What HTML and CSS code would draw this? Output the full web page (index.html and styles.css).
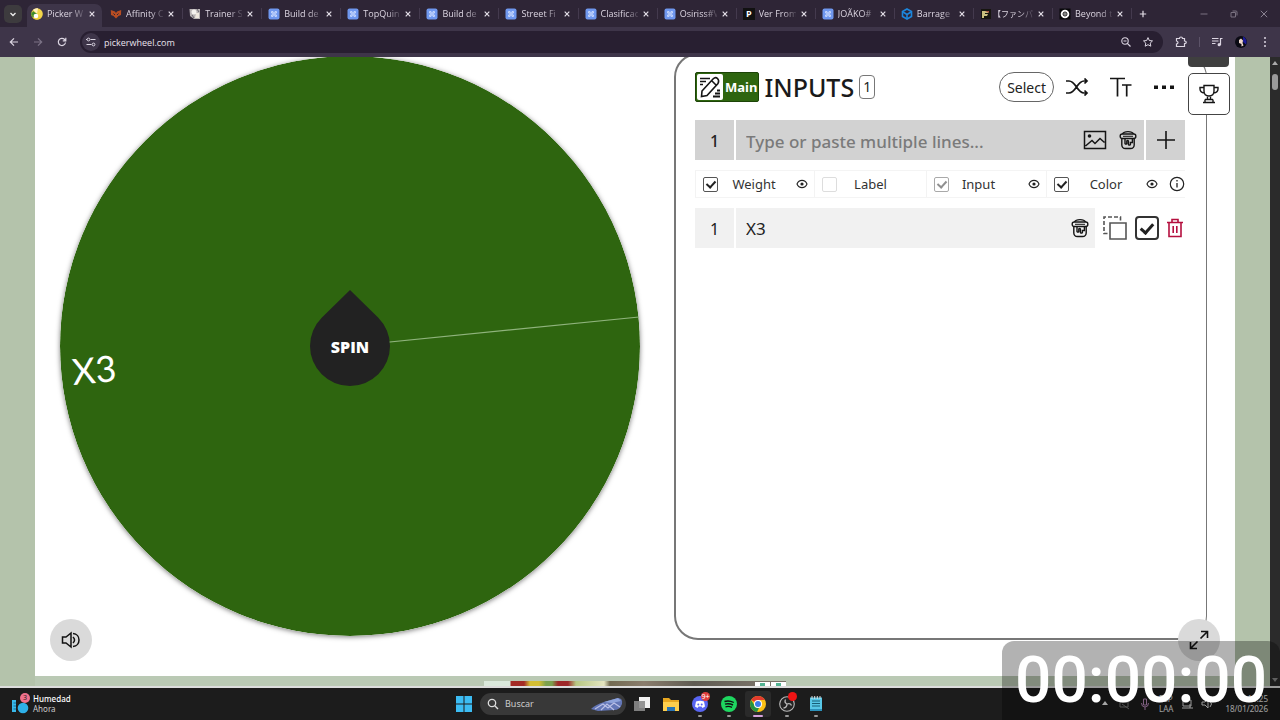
FILE: index.html
```html
<!DOCTYPE html>
<html lang="en">
<head>
<meta charset="utf-8">
<title>Picker Wheel</title>
<link rel="stylesheet" href="styles.css">
</head>
<body>
<svg class="defs" aria-hidden="true">
  <symbol id="doc" viewBox="0 0 12 12"><rect x="0.5" y="0.5" width="11" height="11" rx="2" fill="#6f97ee"/><path d="M3.500 3.500h1.500v1.500H3.500zM7 3.500h1.500v1.500H7zM3.500 7h1.500v1.500H3.500zM7 7h1.500v1.500H7zM5 5h2v2H5z" fill="none" stroke="#c3d4fb" stroke-width="1"/></symbol>
  <symbol id="x" viewBox="0 0 8 8"><path d="M1.700 1.700l4.600 4.600M6.300 1.700L1.700 6.300" stroke="#e4dfe8" stroke-width="1.200"/></symbol>
  <symbol id="eye" viewBox="0 0 12 10"><path d="M1 5C3 .2 9 .2 11 5C9 9.800 3 9.800 1 5z" fill="none" stroke="#222" stroke-width="1.100"/><circle cx="6" cy="5" r="1.600" fill="#222"/></symbol>
  <symbol id="bucket" viewBox="0 0 18 20"><g fill="none" stroke="#151515" stroke-width="1.400"><path d="M3.500 4C5 .8 13 .8 14.500 4"/><rect x="1.200" y="4" width="15.600" height="4.500" rx="2"/><path d="M4 6.300h10" stroke-width="1"/><path d="M2.800 8.500V15Q3 18.500 6.500 18.500H11.500Q15 18.500 15.200 15V8.500"/><path d="M6 8.500v5q.9 1.200 1.800 0V11q.8-1 1.600 0v3.500q1 1.200 2 0V12.500h2v-4"/></g></symbol>
</svg>

<header class="browser">
  <div class="tabstrip">
    <button class="tab-search" aria-label="Search tabs"><svg viewBox="0 0 8 8" width="8" height="8"><path d="M1.500 3L4 5.500 6.500 3" fill="none" stroke="#eee" stroke-width="1.300"/></svg></button>
    <nav class="tabs">
      <div class="tab active"><svg class="fav" viewBox="0 0 12 12"><circle cx="6" cy="6" r="5.800" fill="#f3d64b"/><path d="M6 6L2 1.800A5.800 5.800 0 0 1 7 .3z" fill="#fff0c0"/><path d="M6 6L.5 4A5.800 5.800 0 0 0 2 10z" fill="#5c9a2c"/><path d="M6 6L2 10A5.800 5.800 0 0 0 10.500 9.500z" fill="#f2cf3a"/><path d="M2 3L6 6 .5 7z" fill="#3f8a2e"/><circle cx="5" cy="8" r="2.300" fill="#fff"/></svg><span>Picker W</span><button aria-label="Close"><svg><use href="#x"/></svg></button></div>
      <div class="tab"><svg class="fav" viewBox="0 0 12 12"><path d="M.8 2L5 3.500 6 5 7 3.500 11.200 2 11 7 8.500 8 6 10.500 3.500 8 1 7z" fill="#b84d22"/><path d="M3.500 5.500l1.500 1.500M8.500 5.500L7 7" stroke="#2e2536"/></svg><span>Affinity C</span><button aria-label="Close"><svg><use href="#x"/></svg></button></div>
      <div class="tab"><svg class="fav" viewBox="0 0 12 12"><path d="M.5 1H11V11H5L1 8z" fill="#b9b4b5"/><circle cx="5" cy="4" r="2.500" fill="#f5f2ef"/><path d="M7 5h3v5H6z" fill="#efe8df"/><path d="M8 1l2 3M3 7l2 3" stroke="#6b6670"/></svg><span>Trainer S</span><button aria-label="Close"><svg><use href="#x"/></svg></button></div>
      <div class="tab"><svg class="fav"><use href="#doc"/></svg><span>Build de</span><button aria-label="Close"><svg><use href="#x"/></svg></button></div>
      <div class="tab"><svg class="fav"><use href="#doc"/></svg><span>TopQuin</span><button aria-label="Close"><svg><use href="#x"/></svg></button></div>
      <div class="tab"><svg class="fav"><use href="#doc"/></svg><span>Build de</span><button aria-label="Close"><svg><use href="#x"/></svg></button></div>
      <div class="tab"><svg class="fav"><use href="#doc"/></svg><span>Street Fi</span><button aria-label="Close"><svg><use href="#x"/></svg></button></div>
      <div class="tab"><svg class="fav"><use href="#doc"/></svg><span>Clasificac</span><button aria-label="Close"><svg><use href="#x"/></svg></button></div>
      <div class="tab"><svg class="fav"><use href="#doc"/></svg><span>Osiriss#V</span><button aria-label="Close"><svg><use href="#x"/></svg></button></div>
      <div class="tab"><i class="fav fav-p">P</i><span>Ver From</span><button aria-label="Close"><svg><use href="#x"/></svg></button></div>
      <div class="tab"><svg class="fav"><use href="#doc"/></svg><span>JOÃKO#</span><button aria-label="Close"><svg><use href="#x"/></svg></button></div>
      <div class="tab"><svg class="fav" viewBox="0 0 12 12"><path d="M6 1l4.500 2.500v5L6 11 1.500 8.500v-5z" fill="none" stroke="#1c86dc" stroke-width="1.600"/><path d="M2 4l4 2.500L10 4M6 6.500V11" fill="none" stroke="#1c86dc" stroke-width="1.600"/></svg><span>Barrage</span><button aria-label="Close"><svg><use href="#x"/></svg></button></div>
      <div class="tab"><svg class="fav" viewBox="0 0 12 12"><rect x="1" y="1" width="10" height="10" fill="#16150f"/><path d="M2 3h7L8 5H5v1h3L7 8H4v2H2z" fill="#c9c07e"/><path d="M5 3h4v2z" fill="#a95542"/></svg><span class="jp">【ファンパ</span><button aria-label="Close"><svg><use href="#x"/></svg></button></div>
      <div class="tab"><svg class="fav" viewBox="0 0 12 12"><rect x=".5" y=".5" width="11" height="11" fill="#08080a"/><circle cx="6" cy="6" r="4.300" fill="#fff"/><circle cx="6" cy="6" r="2" fill="none" stroke="#111"/><path d="M5 6h2" stroke="#111"/></svg><span>Beyond t</span><button aria-label="Close"><svg><use href="#x"/></svg></button></div>
    </nav>
    <button class="new-tab" aria-label="New tab"><svg viewBox="0 0 8 8" width="8" height="8"><path d="M4 .8v6.400M.8 4h6.400" stroke="#e4dfe8" stroke-width="1.200"/></svg></button>
    <div class="window-buttons">
      <button aria-label="Minimize"><svg viewBox="0 0 8 8" width="8" height="8"><path d="M.5 4h7" stroke="#7a7281"/></svg></button>
      <button aria-label="Restore"><svg viewBox="0 0 8 8" width="8" height="8"><path d="M1 2.500h4.500V7H1zM2.500 1H6Q7 1 7 2v3.500" fill="none" stroke="#7a7281"/></svg></button>
      <button aria-label="Close window"><svg viewBox="0 0 8 8" width="8" height="8"><path d="M.8.8l6.400 6.400M7.200.8L.8 7.200" stroke="#8a8291"/></svg></button>
    </div>
  </div>
  <div class="toolbar">
    <button aria-label="Back"><svg viewBox="0 0 10 10"><path d="M9 5H1.500M5 1.300L1.300 5 5 8.700" fill="none" stroke="#dcd6e2" stroke-width="1.200"/></svg></button>
    <button aria-label="Forward"><svg viewBox="0 0 10 10"><path d="M1 5h7.500M5 1.300L8.700 5 5 8.700" fill="none" stroke="#7c7386" stroke-width="1.200"/></svg></button>
    <button aria-label="Reload"><svg viewBox="0 0 10 10"><path d="M8.500 5.500A3.600 3.600 0 1 1 7.600 2.500L8.700 3.700M8.800.8V3.800H5.800" fill="none" stroke="#dcd6e2" stroke-width="1.200"/></svg></button>
    <div class="omnibox">
      <button class="site-info" aria-label="Site information"><svg viewBox="0 0 10 10"><path d="M0 2.500h1M4.500 2.500H9.500M.5 7.500h5" stroke="#dcd6e2" stroke-width="1.200"/><circle cx="2.500" cy="2.500" r="1.400" fill="none" stroke="#dcd6e2"/><circle cx="7.500" cy="7.500" r="1.400" fill="none" stroke="#dcd6e2"/></svg></button>
      <input aria-label="Address" value="pickerwheel.com">
      <button aria-label="Zoom"><svg viewBox="0 0 10 10"><circle cx="4" cy="4" r="3.200" fill="none" stroke="#dcd6e2" stroke-width="1.100"/><path d="M6.300 6.300L9.500 9.500M2.500 4h3" stroke="#dcd6e2" stroke-width="1.200"/></svg></button>
      <button aria-label="Bookmark"><svg viewBox="0 0 10 10"><path d="M5 .6L6.300 3.500 9.500 3.900 7.200 6.100 7.800 9.200 5 7.700 2.200 9.200 2.800 6.100.5 3.900 3.700 3.500z" fill="none" stroke="#dcd6e2"/></svg></button>
    </div>
    <div class="tools">
      <button aria-label="Extensions"><svg viewBox="0 0 12 12"><path d="M1.500 2.500H4.500Q4.500 1 6 1T7.500 2.500H9.500V5Q11.300 5 11.300 6.300T9.500 7.700V10.500H1.500V8Q3 7.800 3 6.500T1.500 5z" fill="none" stroke="#dcd6e2" stroke-width="1.200"/></svg></button>
      <i class="divider"></i>
      <button aria-label="Media"><svg viewBox="0 0 12 12"><path d="M1 2.500h6.500M1 5h6.500M1 7.500h3.500M9.500 9V2.500H11.500" fill="none" stroke="#dcd6e2" stroke-width="1.200"/><circle cx="8.200" cy="8.700" r="1.600" fill="#dcd6e2"/></svg></button>
      <button aria-label="Profile"><svg viewBox="0 0 12 12"><circle cx="6" cy="6" r="6" fill="#0b0b14"/><path d="M8 .5a6 6 0 0 1 3 8L8 6z" fill="#1c1b96"/><path d="M4 4l2-1.500 2 2-.5 2.500 1 2.500-2 1V8L4 7z" fill="#f0d9cc"/></svg></button>
      <button aria-label="Menu"><svg viewBox="0 0 12 12"><circle cx="6" cy="2" r="1" fill="#dcd6e2"/><circle cx="6" cy="6" r="1" fill="#dcd6e2"/><circle cx="6" cy="10" r="1" fill="#dcd6e2"/></svg></button>
    </div>
  </div>
</header>

<div class="viewport">
  <div class="page">
    <main class="content">
      <section class="wheel-area">
        <div class="wheel">
          <svg viewBox="0 0 580 580" class="disc"><circle cx="290" cy="290" r="290" fill="#2e650f"/><path d="M290 290L579 261" stroke="#8fb37c" stroke-width="1.200"/></svg>
          <span class="slice-label">X3</span>
          <button class="spin"><svg viewBox="0 0 80 96"><path d="M40 0L68.300 27.700A40 40 0 1 1 11.700 27.700z" fill="#222"/></svg><b>SPIN</b></button>
        </div>
        <button class="round sound" aria-label="Sound"><svg viewBox="0 0 20 18" width="20" height="18"><path d="M1.500 6H5L10 2V16L5 12H1.500z" fill="none" stroke="#111" stroke-width="1.500"/><path d="M12 6Q15 9 12 12M12 2.500C20 3 20 15 12 15.500" fill="none" stroke="#111" stroke-width="1.500"/></svg></button>
      </section>

      <section class="panel">
        <div class="panel-head">
          <button class="main-btn"><svg viewBox="0 0 26 26"><rect width="26" height="26" rx="2" fill="#fff"/><g stroke="#151515" fill="none"><path d="M3 4.500h10M3 7.500h6M3 10.500h3" stroke-width="1.600"/><path d="M16 22.500h7M18 19.500h5M20 16.500h3" stroke-width="1.800"/><path d="M5 17L16 5Q18.500 2.500 20.500 4.500T21 9.500L10 21.500 4.500 22.500zM14.500 6.500l4.500 4.500" stroke-width="1.600"/></g></svg><span>Main</span></button>
          <h1>INPUTS</h1><span class="count">1</span>
          <div class="actions">
            <button class="select">Select</button>
            <button aria-label="Shuffle"><svg viewBox="0 0 24 18" width="24" height="18"><path d="M1 3H4C11 3 12 15 19 15H22M1 15H4C11 15 12 3 19 3H22M19.500 .5L22 3 19.500 5.500M19.500 12.500L22 15 19.500 17.500" fill="none" stroke="#151515" stroke-width="1.700"/></svg></button>
            <button aria-label="Text size"><svg viewBox="0 0 24 22" width="24" height="22"><path d="M1 2.500H16M8.500 2.500V20.500M13 9H22.500M17.700 9V20.500" fill="none" stroke="#151515" stroke-width="1.700"/></svg></button>
            <button aria-label="More"><svg viewBox="0 0 22 6" width="22" height="6"><path d="M1 1.500h4v3.500h-4zM9 1.500h4v3.500H9zM17 1.500h4v3.500h-4z" fill="#151515"/></svg></button>
          </div>
        </div>

        <div class="new-entry">
          <span class="num">1</span>
          <input aria-label="New input" placeholder="Type or paste multiple lines...">
          <button aria-label="Image"><svg viewBox="0 0 24 20" width="24" height="20"><path d="M1.500 1.500h21v17h-21zM2.500 16L9 10.500 12 13.500 17 8.500 21.500 12.500" fill="none" stroke="#151515" stroke-width="1.500"/><circle cx="6.500" cy="6" r="1.800" fill="#151515"/></svg></button>
          <button aria-label="Color"><svg width="18" height="20"><use href="#bucket"/></svg></button>
          <button class="add" aria-label="Add"><svg viewBox="0 0 18 18" width="18" height="18"><path d="M9 0v18M0 9h18" stroke="#151515" stroke-width="1.600"/></svg></button>
        </div>

        <div class="columns">
          <label><input type="checkbox" checked><span>Weight</span></label>
          <button aria-label="Show weight"><svg><use href="#eye"/></svg></button>
          <label class="lab"><input type="checkbox" class="off"><span>Label</span></label>
          <label class="inp"><input type="checkbox" class="dim" checked><span>Input</span></label>
          <button aria-label="Show input"><svg><use href="#eye"/></svg></button>
          <label><input type="checkbox" checked><span>Color</span></label>
          <button aria-label="Show color"><svg><use href="#eye"/></svg></button>
          <button class="info" aria-label="Info"><svg viewBox="0 0 16 16"><circle cx="8" cy="8" r="6.700" fill="none" stroke="#222" stroke-width="1.200"/><path d="M8 7v4.500M8 4v1.500" stroke="#222" stroke-width="1.300"/></svg></button>
        </div>

        <div class="entry">
          <div class="entry-main">
            <span class="num">1</span>
            <input aria-label="Input 1" value="X3">
            <button aria-label="Color"><svg width="18" height="20"><use href="#bucket"/></svg></button>
          </div>
          <button aria-label="Duplicate"><svg viewBox="0 0 24 24" width="24" height="24"><path d="M7 7h16v16H7z" fill="none" stroke="#555" stroke-width="1.600"/><path d="M4.500 17.500H1V1H17.500V4.500" fill="none" stroke="#555" stroke-width="1.600" stroke-dasharray="4 2"/></svg></button>
          <input type="checkbox" aria-label="Enabled" class="big" checked>
          <button aria-label="Delete"><svg viewBox="0 0 16 20" width="16" height="20"><path d="M0 4.500h16M5 4V1.500h6V4M2 4.500V18.500H14V4.500M6.200 8v7M9.800 8v7" fill="none" stroke="#b5103f" stroke-width="1.600"/></svg></button>
        </div>
      </section>

      <div class="side-tab"></div>
      <button class="trophy" aria-label="Results"><svg viewBox="0 0 20 20" width="20" height="20"><path d="M5 1.500h10V7Q15 12 10 12T5 7zM5 3.500H1V5Q1 8.500 5.500 9M15 3.500H19V5Q19 8.500 14.500 9M8.500 12v3.500M11.500 12v3.500M6 15.500h8M4 18.500h12M6 15.500v3M14 15.500v3" fill="none" stroke="#151515" stroke-width="1.400"/></svg></button>
      <button class="round expand" aria-label="Fullscreen"><svg viewBox="0 0 20 20" width="20" height="20"><path d="M11.500 8.500L18 2M12 1.500H18.500V8M8.500 11.500L2 18M1.500 12V18.500H8" fill="none" stroke="#111" stroke-width="1.600"/></svg></button>
    </main>
    <div class="ad-strip"><div class="ad"><i></i><i></i></div></div>
  </div>
  <div class="scrollbar"><svg viewBox="0 0 8 6"><path d="M4 1l3 4H1z" fill="#aaa"/></svg><i></i><svg class="down" viewBox="0 0 8 6"><path d="M4 5l3-4H1z" fill="#888"/></svg></div>
</div>

<footer class="taskbar">
  <div class="weather"><svg viewBox="0 0 20 20" width="20" height="20"><rect x="1" y="6" width="4" height="12" fill="#39b9ea"/><path d="M2.500 9H5M2.500 12H5M2.500 15H5" stroke="#146b99"/><circle cx="12" cy="14" r="5.300" fill="#2eb0e8"/></svg><span class="badge">3</span><p><b>Humedad</b><br>Ahora</p></div>
  <div class="apps">
    <button aria-label="Start"><svg viewBox="0 0 16 16"><path d="M0 0h7.500v7.500H0zM8.500 0H16v7.500H8.500zM0 8.500h7.500V16H0zM8.500 8.500H16V16H8.500z" fill="#3cbcf3"/></svg></button>
    <label class="search"><svg viewBox="0 0 12 12" width="12" height="12"><circle cx="5" cy="5" r="3.700" fill="none" stroke="#ddd" stroke-width="1.300"/><path d="M7.800 7.800l3.200 3.200" stroke="#ddd" stroke-width="1.400"/></svg><input placeholder="Buscar" aria-label="Buscar"><svg class="shell" viewBox="0 0 34 16" width="34" height="16"><path d="M1 13Q5 9 14 6L28 2Q33 2 32 8 30 14 24 14L8 15z" fill="#6376b6"/><path d="M14 6L28 2 31 5 22 7z" fill="#8fa4dc"/><path d="M5 13L13 8 18 12 24 7 30 11M11 14l6-6 7 6" fill="none" stroke="#b9bfe6" stroke-width="1.200"/></svg></label>
    <button aria-label="Task view"><svg viewBox="0 0 16 16"><path d="M5 1h11v11H5z" fill="#f1f1f1"/><path d="M0 5h11v10H0z" fill="#8b8b8b" opacity=".9"/></svg></button>
    <button aria-label="Files"><svg viewBox="0 0 16 16"><path d="M0 2h6l2 2h8v11H0z" fill="#e8a720"/><path d="M0 6h16v9H0z" fill="#ffcf4d"/><path d="M4 11h8v4H4z" fill="#2874b5"/></svg></button>
    <button class="open" aria-label="Discord"><svg viewBox="0 0 16 16"><circle cx="8" cy="8" r="8" fill="#5865f2"/><path d="M4 5.500Q8 4 12 5.500L13 10.500 10.500 12 9.500 10.500h-3L5.500 12 3 10.500z" fill="#fff"/><circle cx="6.300" cy="8.500" r="1" fill="#5865f2"/><circle cx="9.700" cy="8.500" r="1" fill="#5865f2"/></svg><span class="badge">9+</span></button>
    <button class="open" aria-label="Spotify"><svg viewBox="0 0 16 16"><circle cx="8" cy="8" r="8" fill="#1ed760"/><path d="M3.500 5.500Q8 4 12.800 6.500M4 8.200Q8 7 12 9M4.500 10.800Q8 9.800 11 11.400" fill="none" stroke="#111" stroke-width="1.400"/></svg></button>
    <button class="open current" aria-label="Chrome"><svg viewBox="0 0 16 16"><circle cx="8" cy="8" r="8" fill="#fbc116"/><path d="M8 8L1.100 4A8 8 0 0 1 14.900 4H8z" fill="#e33b2e"/><path d="M1.100 4L5 10 9 12 7 15.900A8 8 0 0 1 1.100 4z" fill="#229342"/><circle cx="8" cy="8" r="4" fill="#fff"/><circle cx="8" cy="8" r="3" fill="#3c7de8"/></svg></button>
    <button class="open" aria-label="OBS"><svg viewBox="0 0 16 16"><circle cx="8" cy="8" r="7.300" fill="#242424" stroke="#b9b9b9" stroke-width="1.100"/><path d="M6.500 3.500Q5 6.500 8 8 11.500 7 12.500 9.500M8 8Q8 11.500 4.500 12" fill="none" stroke="#b9b9b9" stroke-width="1.300"/></svg><span class="badge rec"></span></button>
    <button class="open" aria-label="Notepad"><svg viewBox="0 0 16 16"><path d="M2 1.500h12V15H2z" fill="#58c8e8"/><path d="M2 13h12v2H2z" fill="#2c91ba"/><path d="M4 5h8M4 7.500h8M4 10h8" stroke="#176078"/><path d="M4 0v3M6.700 0v3M9.300 0v3M12 0v3" stroke="#ddd"/></svg></button>
  </div>
  <div class="tray">
    <svg viewBox="0 0 12 12" width="12" height="12"><path d="M3 7l3-4 3 4zM2 9l8 1" fill="#eee"/></svg>
    <svg viewBox="0 0 12 12" width="12" height="12"><path d="M1 4h8v5H1zM3 6l7 5" fill="none" stroke="#777"/></svg>
    <svg viewBox="0 0 12 12" width="12" height="12"><path d="M4.500 1h3v6h-3zM2.500 5Q2.500 9 6 9T9.500 5M6 9v3" fill="none" stroke="#b687b8"/></svg>
    <span>ESP<br>LAA</span>
    <svg viewBox="0 0 12 12" width="12" height="12"><path d="M2 2h8v6H2zM1 10h8M9 6v4h3" fill="none" stroke="#ddd"/></svg>
    <svg viewBox="0 0 12 12" width="12" height="12"><path d="M1 4h3l3-3v9L4 7H1zM9 3q3 3 0 6" fill="none" stroke="#ddd"/></svg>
    <time>16:25<br>18/01/2026</time>
  </div>
</footer>
<div class="timer">00:00:00</div>
</body>
</html>
```
FILE: styles.css
```css
* { box-sizing: border-box; }
body { margin: 0; min-height: 100vh; display: flex; flex-direction: column; position: relative; overflow: hidden; background: #1c1c1c; color: #222; font-family: "Noto Sans", "Open Sans", "Noto Sans CJK JP", sans-serif; }
button { display: flex; align-items: center; justify-content: center; margin: 0; padding: 0; border: 0; background: none; color: inherit; font: inherit; }
input { margin: 0; padding: 0; border: 0; background: none; color: inherit; font: inherit; min-width: 0; outline: 0; }
svg { display: block; flex: none; }
.defs { position: absolute; width: 0; height: 0; }

/* Browser chrome */
.browser { color: #ddd6e2; font-family: "Open Sans", "Noto Sans CJK JP", sans-serif; font-size: 9px; background: #3e3549; position: relative; z-index: 2; }
.tabstrip { display: flex; align-items: center; height: 27px; background: #2e2536; }
.tab-search { width: 18px; height: 18px; margin: 0 5px 0 4px; border-radius: 5px; background: #3d3b3e; }
.tabs { flex: 1; display: flex; align-self: stretch; min-width: 0; }
.tab { flex: 1 1 0; min-width: 0; display: flex; align-items: center; gap: 4px; padding: 0 10px 0 4px; position: relative; }
.tab.active { background: #3e3549; border-radius: 7px 7px 0 0; margin: 4px 4px 0 0; padding: 0 6px 4px 4px; }
.tab + .tab::after { content: ""; position: absolute; right: 2px; top: 8px; height: 11px; border-right: 1px solid #443a4e; }
.tab span { flex: 1; overflow: hidden; white-space: nowrap; -webkit-mask-image: linear-gradient(90deg, #000 65%, rgba(0, 0, 0, .15)); mask-image: linear-gradient(90deg, #000 65%, rgba(0, 0, 0, .15)); }
.tab .jp { font-size: 8px; margin-left: -3px; }
.tab button svg { width: 8px; height: 8px; }
.fav { width: 12px; height: 12px; flex: none; }
.fav-p { background: #111; color: #fff; font: bold 9px/12px "Open Sans", sans-serif; text-align: center; }
.new-tab { width: 18px; }
.window-buttons { display: flex; justify-content: space-between; width: 68px; margin: 0 12px 0 48px; }
.toolbar { display: flex; align-items: center; height: 30px; padding-left: 9px; gap: 14px; }
.toolbar svg { width: 10px; height: 10px; }
.omnibox { flex: 1; display: flex; align-items: center; gap: 12px; height: 22px; margin-left: -1px; padding: 0 10px 0 2px; border-radius: 11px; background: #281f31; }
.omnibox input { flex: 1; margin-left: -8px; color: #e8e2ec; }
.site-info { width: 18px; height: 18px; border-radius: 50%; background: #3e3549; }
.tools { display: flex; align-items: center; gap: 12px; padding-right: 9px; margin-left: -2px; }
.tools svg { width: 12px; height: 12px; }
.divider { height: 10px; border-left: 1px solid #5c5368; margin-right: -1px; }

/* Page */
.viewport { flex: 1; display: flex; background: #b4c3ab; border-bottom: 2px solid #dcdcdc; }
.page { flex: 1; display: flex; flex-direction: column; }
.content { flex: 1; display: grid; grid-template-columns: 639fr 533fr; position: relative; margin: 0 35px; padding-right: 28px; background: #fff; }
.wheel-area { position: relative; padding: 0 34px 0 25px; margin-top: -1px; }
.wheel { position: relative; }
.disc { width: 100%; border-radius: 50%; box-shadow: 0 1px 5px rgba(0, 0, 0, .5); }
.slice-label { position: absolute; left: 12px; top: 286px; color: #fff; font: 36px/54px Lato, sans-serif; transform: rotate(-5deg); }
.spin { position: absolute; left: 50%; top: 50%; width: 80px; height: 96px; margin: -56px 0 0 -40px; color: #fff; }
.spin svg { width: 80px; height: 96px; }
.spin b { position: absolute; left: 0; right: 0; top: 46px; font: 800 16px/22px "Open Sans", sans-serif; text-align: center; }
.round { position: absolute; width: 42px; height: 42px; border-radius: 50%; background: #dadada; }
.sound { left: 15px; bottom: 15px; }
.expand { right: 15px; bottom: 15px; }
.panel { margin: -4px 0 36px; padding: 16px 20px 16px 19px; border: 2px solid #777; border-right-width: 1px; border-radius: 24px; padding-right: 21px; }
.panel-head { display: flex; align-items: center; height: 32px; }
.main-btn { height: 30px; padding: 0 1px; gap: 2px; border: 1px solid #1c4407; border-radius: 2px; background: #2e650f; color: #fff; font-size: 13px; font-weight: 700; }
.main-btn svg { width: 26px; height: 26px; }
h1 { margin: 0 5px; font-size: 25px; line-height: 32px; font-weight: 500; color: #1a1a1a; }
.count { padding: 0 3px; border: 1px solid #777; border-radius: 4px; font-size: 14px; line-height: 22px; }
.actions { flex: 1; display: flex; align-items: center; justify-content: flex-end; gap: 20px; padding-right: 10px; }
.select { height: 30px; padding: 0 7px; margin-right: -9px; border: 1px solid #666; border-radius: 15px; font-size: 14px; }
.new-entry { display: flex; align-items: center; height: 40px; margin-top: 17px; background: #d2d2d2; font-size: 17px; font-weight: 500; }
.num { width: 41px; align-self: stretch; border-right: 2px solid #fff; text-align: center; line-height: 42px; font-size: 16px; flex: none; }
.new-entry input { flex: 1; padding: 2px 0 0 10px; }
.new-entry input::placeholder { color: #7a7a7a; opacity: 1; }
.new-entry button + button { margin-left: 12px; }
.new-entry .add { margin-left: 7px; width: 41px; align-self: stretch; border-left: 2px solid #fff; }
.columns { display: grid; grid-template-columns: 95fr 24fr 112fr 96fr 24fr 97fr 18fr 24px; align-items: center; height: 28px; margin-top: 10px; border: solid #f4f4f4; border-width: 1px 0; font-size: 13px; color: #333; }
.columns label { display: flex; align-items: center; height: 26px; padding-left: 7px; border-left: 1px solid #f3f3f3; }
.columns label span { flex: 1; text-align: center; }
.columns .lab { padding-right: 22px; }
.columns .inp { padding-right: 14px; }
.columns svg { width: 12px; height: 10px; }
.columns .info { justify-content: flex-end; }
.columns .info svg { width: 16px; height: 16px; }
input[type=checkbox] { appearance: none; flex: none; width: 15px; height: 15px; border: 1px solid #555; border-radius: 2px; display: grid; place-items: center; }
input[type=checkbox]:checked::after { content: ""; width: 4px; height: 7px; margin-top: -2px; border: solid #222; border-width: 0 2px 2px 0; transform: rotate(42deg); }
input[type=checkbox].off { border-color: #ddd; }
input.dim { opacity: .5; }
.entry { display: flex; align-items: center; gap: 8px; height: 40px; margin-top: 10px; padding-right: 2px; }
.entry-main { flex: 1; display: flex; align-items: center; align-self: stretch; padding-right: 6px; background: #f1f1f1; }
.entry-main input { flex: 1; padding-left: 10px; font-size: 17px; }
input[type=checkbox].big { width: 24px; height: 24px; border: 2px solid #333; border-radius: 4px; }
input[type=checkbox].big:checked::after { width: 5px; height: 10px; border-width: 0 3px 3px 0; }
.side-tab { position: absolute; right: 6px; top: 0; width: 41px; height: 10px; border-radius: 0 0 4px 4px; background: #3f3f3f; }
.trophy { position: absolute; right: 5px; top: 16px; width: 42px; height: 42px; border: 1px solid #444; border-radius: 5px; background: #fff; }
.ad-strip { display: flex; align-items: flex-end; justify-content: center; height: 10px; background: #bac9b4; margin: 0 35px; }
.ad { display: flex; justify-content: flex-end; gap: 1px; width: 302px; height: 5px; background: linear-gradient(90deg, #dbe9dc 0 26px, #a42b25 27px 40px, #d4be32 46px 55px, #7ba04d 62px 68px, #9e2829 74px 84px, #b7c783 92px, #e4e5c1 120px, #726a51 126px, #8a7d6d 160px, #5f5b52 210px, #777066 270px); }
.ad i { width: 15px; height: 4px; align-self: flex-end; border: solid #fff; border-width: 1px 5px 0; background: #55b594; }
.scrollbar { width: 10px; display: flex; flex-direction: column; align-items: center; padding: 3px 0; background: #2b2b2b; }
.scrollbar svg { width: 8px; height: 6px; }
.scrollbar i { width: 6px; height: 16px; margin-top: 8px; border-radius: 3px; background: #9b9b9b; }
.scrollbar .down { margin-top: auto; }

/* Taskbar */
.taskbar { display: grid; grid-template-columns: 1fr auto 1fr; align-items: center; height: 32px; background: #1c1c1c; color: #ccc; font-size: 8px; line-height: 10px; }
.weather { display: flex; align-items: center; gap: 2px; padding-left: 11px; position: relative; }
.weather p { margin: 0; }
.weather b { color: #fff; font-weight: 500; }
.badge { position: absolute; left: 20px; top: -1px; width: 10px; height: 10px; border-radius: 50%; background: #f0718d; color: #222; font-size: 7px; text-align: center; }
.apps { display: flex; align-items: center; gap: 3px; }
.apps button { width: 26px; height: 26px; position: relative; border-radius: 3px; }
.apps button svg { width: 16px; height: 16px; }
.apps .badge { left: 14px; top: 1px; background: #e03c3c; color: #fff; width: auto; min-width: 9px; height: 9px; line-height: 9px; border-radius: 5px; }
.apps .rec { background: #f01414; }
.open::after { content: ""; position: absolute; bottom: 0; left: 11px; width: 4px; height: 2px; background: #999; border-radius: 1px; }
.apps .current { background: #2a2a2a; }
.current::after { left: 8px; width: 10px; background: #d5a2dc; }
.search { display: flex; align-items: center; gap: 6px; width: 146px; height: 22px; padding: 0 2px 0 7px; border-radius: 11px; background: #383838; font-size: 9px; }
.search input { flex: 1; }
.search input::placeholder { color: #ccc; opacity: 1; }
.tray { display: flex; align-items: center; justify-content: flex-end; gap: 8px; padding-right: 12px; color: #e4e4e4; }
.tray time { text-align: right; margin-left: 4px; }
.timer { position: absolute; right: 0; bottom: 0; z-index: 3; height: 79px; padding: 0 13px; border-radius: 12px 12px 0 0; background: rgba(0, 0, 0, .3); color: #fff; font: 500 64px/80px Roboto, sans-serif; }
```
